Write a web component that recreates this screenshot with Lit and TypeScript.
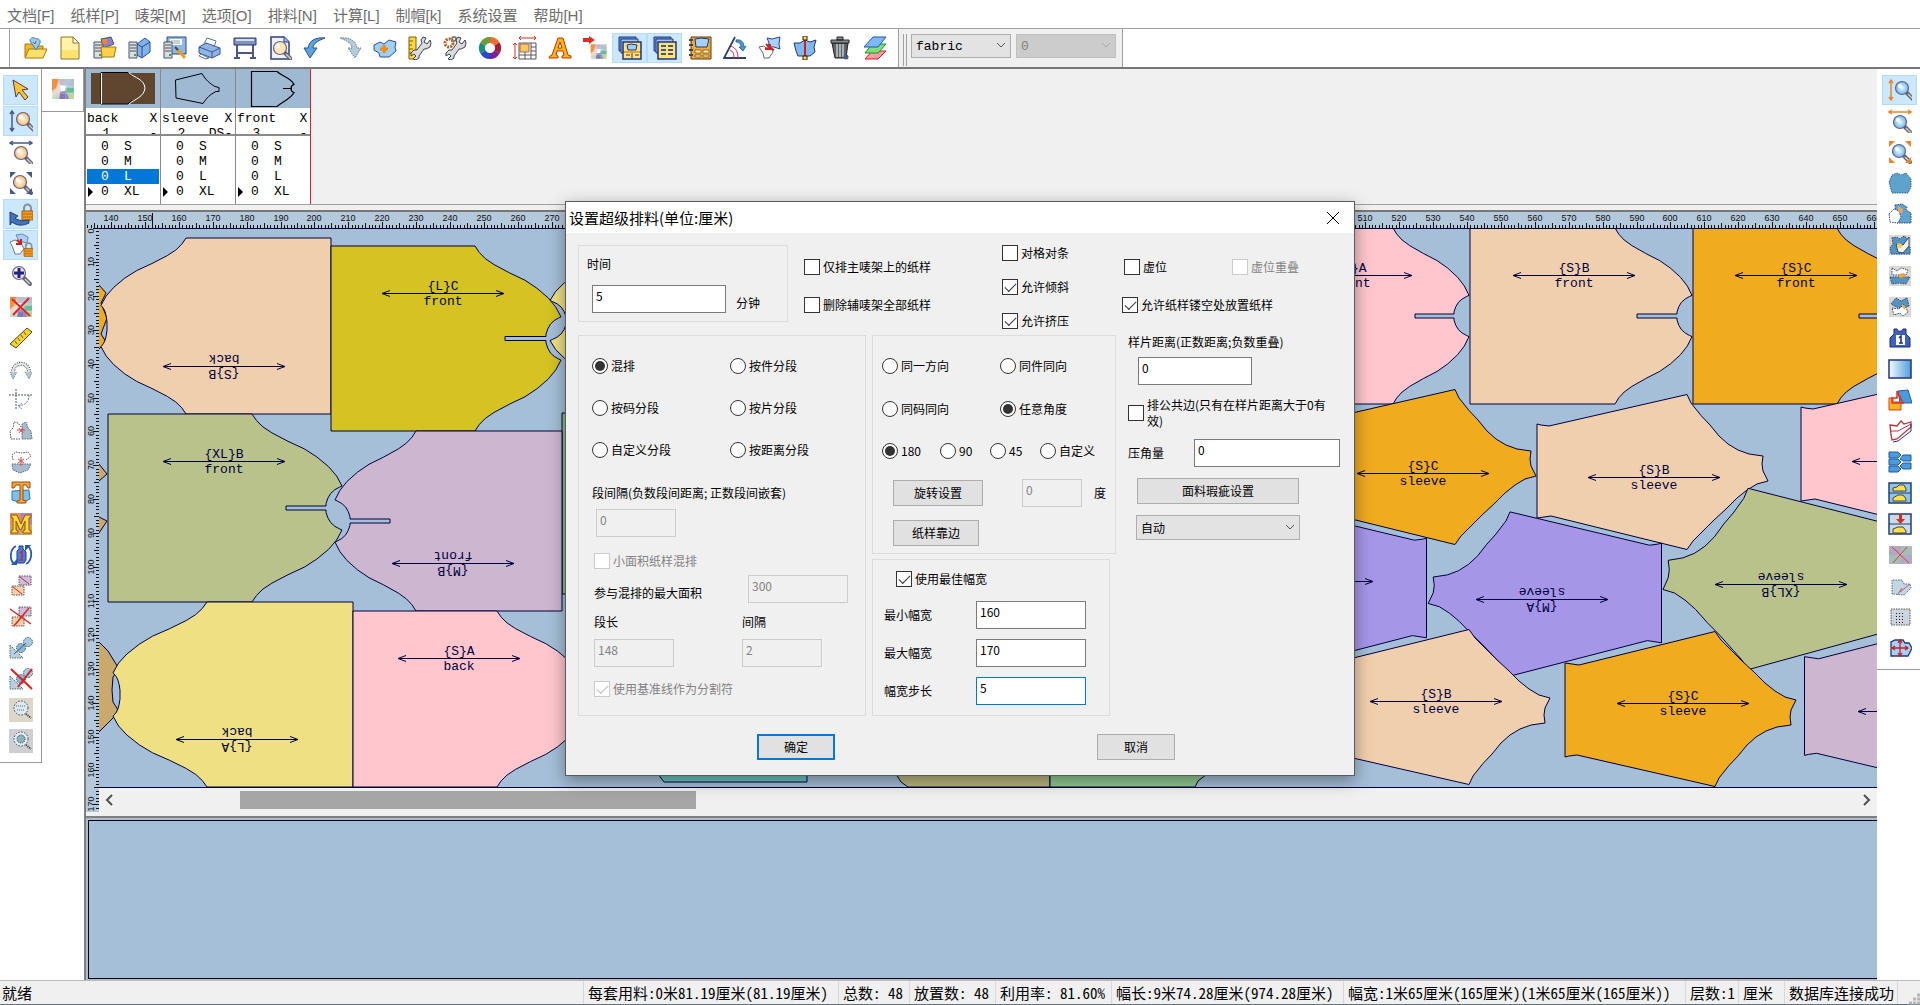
import { LitElement, html, svg, css, nothing } from "lit";
import { customElement } from "lit/decorators.js";
import { classMap } from "lit/directives/class-map.js";

/* ---------- icons (24 x 24 grid) ---------- */

const lens = (x: number, y: number, fill: string) => svg`
  <path d="M${x + 5} ${y + 5}l6 6" stroke="#5f6376" stroke-width="4" stroke-linecap="round"/>
  <path d="M${x + 6} ${y + 6}l5 5" stroke="#d6cdbc" stroke-width="1.500"/>
  <circle cx=${x} cy=${y} r="6.500" fill=${fill} stroke="#6a6288" stroke-width="1.200"/>
  <circle cx=${x - 2} cy=${y - 2} r="2.200" fill="#fff" opacity=".85"/>`;
const server = svg`
  <path d="M1 6h8v16H1z" fill="#d9dde2" stroke="#4b5563"/>
  <path d="M2 9h6M2 12h6M2 15h6" stroke="#4b5563"/><path d="M6 18h2v2H6z" fill="#2fae3b"/>`;
const lock = svg`
  <path d="M15 10V6a3.500 3.500 0 0 1 7 0v4" fill="none" stroke="#8b8f98" stroke-width="2"/>
  <path d="M13 9h11v9H13z" fill="#f59b1c" stroke="#a35a08"/><path d="M14 12h9M14 15h9" stroke="#b8690c"/>`;
const blob = (fill: string, stroke = "#24347a", dash = "") => svg`
  <path d="M4 5l5-1 3 2 4-3 4 3-1 5 3 3v7H3l-1-6 3-4z" fill=${fill} stroke=${stroke} stroke-dasharray=${dash}/>`;
const wrench = svg`
  <path d="M15 1l3 1-2 4 3 2 3-4 1 3-1 4-4 2-2 0-5 7 0 2-3 2-3-1 3-3-2-2-3 2 0-3 3-3 3 0 5-7-1-3z" fill="#d9dcdf" stroke="#3f4248"/>`;
const mosaic = svg`
  <path d="M1 2h22v20H1z" fill="url(#mosaicTint)"/>
  <path d="M1 2l7 0-3 9-4 3z" fill="#ee8a36" opacity=".85"/>
  <path d="M8 2h15v8l-9 1-5-1z" fill="#9fb2e0" opacity=".6"/>
  <path d="M14 11h9v5l-9 0z" fill="#4fb28a" opacity=".7"/>
  <path d="M9 15l6-1 3 8H8z" fill="#7a5ab8" opacity=".75"/>
  <path d="M9 8l6 1-1 5-4 0z" fill="#fff" opacity=".9"/>
  <path d="M8 2v20M15 9v13M8 9h15M8 16h15" stroke="#fff" opacity=".35"/>`;
const redCross = svg`<path d="M3 4l18 17M20 3L4 20" stroke="#dd2626" stroke-width="2"/>`;
const window3 = (body: unknown) => svg`
  <path d="M1 1h17v14H1z" fill="#5d95dc" stroke="#24347a"/><path d="M3 3h17v14H3z" fill="#9cc4f0" stroke="#24347a"/>
  <path d="M5 6h18v17H5z" fill="#ffe27a" stroke="#24347a" stroke-width="1.500"/>${body}`;
const grayCloth = svg`<path d="M1 2h22v20H1z" fill="#dcd8cf"/>`;

const ICONS: Record<string, unknown> = {
  open: svg`<path d="M2 8h7l2 2h9v11H2z" fill="#f0b72a" stroke="#a8780a"/><path d="M6 13h18l-4 9H2z" fill="#ffe06a" stroke="#a8780a"/><path d="M7 5c0-4 5-4 6-2 2-1 5 1 4 4l-4 7z" fill="#8fd0f2" stroke="#3c7fc0"/><path d="M10 6l2 2 1-3" stroke="#d33" fill="none"/>`,
  page: svg`<path d="M3 1h12l6 6v16H3z" fill="#fff3a8" stroke="#8c7320"/><path d="M4 14h16v8H4z" fill="#ffdc55" opacity=".7"/><path d="M15 1v6h6z" fill="#fff" stroke="#8c7320"/>`,
  openServer: svg`<path d="M8 3l10-2 3 7-10 4z" fill="#8d7fc9" stroke="#456"/><path d="M9 3h5v5H9z" fill="#e9873a"/>${server}<path d="M8 11h15l-2 10H9z" fill="#ffd04a" stroke="#a8780a"/>`,
  serverBook: svg`<path d="M9 8l8-6 5 4v10l-8 6-5-3z" fill="#7fb2ea" stroke="#2b4e8c"/><path d="M9 8l5 3 8-5M14 11v10" fill="none" stroke="#2b4e8c"/>${server}`,
  serverSave: svg`<path d="M4 1h19v17H4z" fill="#8db8ea" stroke="#33456e"/><path d="M7 3h12v6H7z" fill="#fff"/><path d="M8 5h9M8 7h9" stroke="#8aa"/>${server}<path d="M14 13l8 9" stroke="#e8a020" stroke-width="3"/><path d="M12 11l3 3" stroke="#444" stroke-width="2"/>`,
  printer: svg`<path d="M6 8l3-6 9 3-2 6z" fill="#fff" stroke="#5b6f9a"/><path d="M1 11l7-4 14 5v6l-8 4L1 17z" fill="#8fb4e6" stroke="#3b5691"/><path d="M1 11l13 5 8-4M14 16v6" fill="none" stroke="#3b5691"/><path d="M3 18l8 4-3 1-7-3z" fill="#fff" stroke="#5b6f9a"/>`,
  plotter: svg`<path d="M4 9v14M20 9v14M4 17h16M1 22h6M17 22h6" stroke="#4b5785" stroke-width="2"/><path d="M1 2h22v7H1z" fill="#7f92bf" stroke="#2c3866"/><path d="M3 4h18" stroke="#d4dcf2" stroke-width="2"/>`,
  preview: svg`<path d="M3 1h13l5 5v17H3z" fill="#eef4fc" stroke="#2c3e7c" stroke-width="1.500"/><path d="M16 1v5h5" fill="#9dbbe8" stroke="#2c3e7c"/>${lens(12, 12, "#ffe6b8")}`,
  undo: svg`<path d="M22 2C12 1 6 5 5 12H1l6 10 7-10h-4c0-4 4-7 12-10z" fill="#5fa0dd" stroke="#24508f"/>`,
  redo: svg`<path d="M2 2c10-1 16 3 17 10h4l-6 10-7-10h4C14 8 10 5 2 2z" fill="#b6ccd8" stroke="#5e7d90" stroke-dasharray="1.500 1"/>`,
  addPiece: svg`<path d="M1 9l6-3 4 2 5-4 7 2-1 5 1 4-7 6H7l-1-4-5-3z" fill="#9fd0f7" stroke="#2c4f9c"/><path d="M11 9v8M7 13h8" stroke="#f08a13" stroke-width="3"/>`,
  rulerWrench: svg`<path d="M1 1h7v22H1z" fill="#ffd83b" stroke="#7a6108"/><path d="M1 5h4M1 9h3M1 13h4M1 17h3" stroke="#7a6108"/>${wrench}`,
  gearWrench: svg`<circle cx="6" cy="7" r="4" fill="none" stroke="#b0622a" stroke-width="3" stroke-dasharray="2 1"/><circle cx="11" cy="3" r="2" fill="none" stroke="#8d7b6a" stroke-width="2"/>${wrench}`,
  colorRing: svg`<g fill="none" stroke-width="6"><path d="M12 4a8 8 0 0 1 7 4" stroke="#e8702a"/><path d="M19 8a8 8 0 0 1 0 8" stroke="#a01c3c"/><path d="M19 16a8 8 0 0 1-7 4" stroke="#7a1fa0"/><path d="M12 20a8 8 0 0 1-7-4" stroke="#2848c8"/><path d="M5 16a8 8 0 0 1 0-8" stroke="#1c8c7c"/><path d="M5 8a8 8 0 0 1 7-4" stroke="#6a9a3c"/></g>`,
  sizeTable: svg`<path d="M6 7h17v16H6z" fill="#fff" stroke="#555"/><path d="M7 8h9v8H7z" fill="#f6c95c" stroke="#a65"/><path d="M6 19h17M18 7v16M12 16v7M18 11h5M18 15h5" stroke="#556"/><path d="M6 2h17M2 7v16M8 0L6 2l2 2M21 0l2 2-2 2M0 9l2-2 2 2M0 21l2 2 2-2" stroke="#cc3322" fill="none"/>`,
  letterA: svg`<path d="M1 22l1-2 2-1L10 2h5l5 17 3 1v2h-9v-2l2-1-1-4H9l-1 4 2 1v2z" fill="#ffb21c" stroke="#b43a00"/><path d="M10 12h4l-2-6z" fill="#fff" stroke="#b43a00"/>`,
  importColor: svg`<g transform="translate(7 7) scale(.72)">${mosaic}</g><path d="M0 2h6V0l6 4-6 4V6H0z" fill="#d43324"/>`,
  winPiece: window3(svg`<path d="M5 16h18M14 16v7M8 19h4M17 19h4" stroke="#24347a"/><path d="M6 15h16v2H6z" fill="#f0a030"/><path d="M9 9l4-1 6 1-1 5h-8z" fill="#9fd0f7" stroke="#24347a"/>`),
  winList: window3(svg`<path d="M8 10h5M15 10h5M8 14h5M15 14h5M8 18h5M15 18h5" stroke="#4a5480" stroke-width="2"/>`),
  book: svg`<path d="M3 1h20v22H3z" fill="#f2a93a" stroke="#533b10"/><path d="M7 3l6-1 8 1-2 8H8z" fill="#a3d2f4" stroke="#24347a"/><path d="M7 14h6v3H7zM15 14h6v3h-6zM7 19h6v2H7zM15 19h6v2h-6z" fill="#fff0a8" stroke="#533b10" stroke-width=".6"/><path d="M1 4h4M1 9h4M1 14h4M1 19h4" stroke="#445" stroke-width="2"/>`,
  angle: svg`<path d="M12 1L1 22h22" fill="none" stroke="#31416e" stroke-width="1.800"/><path d="M8 10c5 2 7 6 7 12M7 14c3 1 4 4 4 8" fill="none" stroke="#cc3344"/><path d="M13 4c5-1 8 2 8 7l2-1-3 5-4-4 2 0c0-3-2-5-5-5z" fill="#4b93d8" stroke="#1c4c88" stroke-width=".7"/>`,
  swapPiece: svg`<path d="M9 2l5 1 8-2-1 7 1 5-6-2-6 0 1-4z" fill="#a9d0f5" stroke="#2c4390"/><path d="M1 11l5-1 2 2 5-1 2 5-4 6H6l-1-5z" fill="#fff" stroke="#666"/><path d="M8 8l4 4M12 8v5H7M16 14l-4-2" stroke="#cc2222" stroke-width="2" fill="none"/>`,
  splitPiece: svg`<path d="M1 7l6 0 5-3 5 2 6-2-2 7 1 5-5 4H5L3 15z" fill="#82b9ec" stroke="#24347a"/><path d="M12 3v18" stroke="#cc2222" stroke-width="2"/><path d="M10 0h4v4h-4zM10 20h4v4h-4z" fill="#ffd83b" stroke="#222"/>`,
  trash: svg`<path d="M4 7h16l-2 15H7z" fill="#5e6368" stroke="#222"/><path d="M9 8v13M12 8v13M15 8v13" stroke="#c6cbd0" stroke-width="1.500"/><path d="M3 4h18v3H3zM9 1h6v3H9z" fill="#8a9096" stroke="#222"/><circle cx="18" cy="21" r="2.500" fill="#445a80"/>`,
  layers: svg`<path d="M9 15h14l-8 8H2z" fill="#ff9aa2" stroke="#c22"/><path d="M9 8h14l-8 9H2z" fill="#7de07c" stroke="#1f8f2f"/><path d="M10 1h13l-8 10H1z" fill="#7db8f8" stroke="#2455a8"/>`,

  pointer: svg`<path d="M4 2l15 9-6 1 6 7-3 3-6-8-3 5z" fill="#ffc531" stroke="#4a3660"/>`,
  zoomV: svg`${lens(14, 10, "url(#warmLens)")}<path d="M3 2v20M1 5l2-3 2 3M1 19l2 3 2-3" stroke="#4a5a88" fill="none" stroke-width="1.500"/>`,
  zoomH: svg`${lens(12, 13, "url(#warmLens)")}<path d="M1 3h22M4 1L1 3l3 2M20 1l3 2-3 2" stroke="#4a5a88" fill="none" stroke-width="1.500"/>`,
  zoomFit: svg`${lens(11, 11, "url(#warmLens)")}<path d="M1 1h6L1 7zM23 1h-6l6 6zM1 23h6l-6-6zM23 23h-6l6-6z" fill="#4a5a88"/>`,
  arrowLock: svg`${lock}<path d="M1 10l8 4-3 2c4 3 8 3 14 2v3c-6 3-12 3-17-1l-2 3z" fill="#4473b8" stroke="#25407c"/>`,
  pieceLock: svg`<path d="M7 2l6-1 6 3-1 6-8-2z" fill="#a9d0f5" stroke="#6a86b0"/><path d="M1 9l5-2 6 3 3 6-4 5H6l-2-6z" fill="#fff" stroke="#777"/><path d="M8 7l4 4M12 6v5H7" stroke="#cc2222" stroke-width="2"/><g transform="translate(4 8) scale(.85)">${lock}</g>`,
  zoomPlus: svg`${lens(10, 9, "#ecdfee")}<path d="M10 4v10M5 9h10" stroke="#1c2280" stroke-width="3"/>`,
  mosaicX: svg`${mosaic}${redCross}`,
  ruler: svg`<path d="M1 18L18 2l5 4L7 22z" fill="#f4d232" stroke="#4c4420"/><path d="M6 15l2 3M9 12l2 3M12 9l2 3M15 6l2 3" stroke="#6b5d18"/>`,
  rotateArc: svg`<path d="M4 18C2 3 22 3 20 18" fill="none" stroke="#444" stroke-width="4" stroke-dasharray="1 1"/><path d="M4 18C2 3 22 3 20 18" fill="none" stroke="#dfe6e8" stroke-width="2"/><path d="M1 15l3 7 4-7M16 15l4 7 3-7" fill="#b8c8cc" stroke="#678" stroke-dasharray="1 1"/>`,
  axisArc: svg`<path d="M7 1v20M0 7h24" stroke="#556" stroke-dasharray="2 1"/><path d="M20 7c0 7-4 10-10 11M13 15l-4 3 4 3" fill="none" stroke="#6a7390" stroke-dasharray="2 1"/>`,
  flipH: svg`<path d="M11 20H2l-1-8 3-3 1-6 4 1 3 4" fill="#fff" stroke="#555" stroke-dasharray="1.500 1"/><path d="M13 20h10l-1-8-3-3-2-6-4 2z" fill="#a9bccd" stroke="#567" stroke-dasharray="1.500 1"/><path d="M8 11h8M10 9l4 5M14 9l-4 5" stroke="#d44"/>`,
  flipV: svg`<path d="M4 10l-1-5 4-3 6 1 6-1 3 4-5 4" fill="#fff" stroke="#555" stroke-dasharray="1.500 1"/><path d="M3 14h19l-3 6-8 3-7-3z" fill="#a9bccd" stroke="#567" stroke-dasharray="1.500 1"/><path d="M12 7v9M9 9l6 4M15 9l-6 4" stroke="#d44"/>`,
  letterT: svg`<path d="M3 10l17-1 1 9-8 4-10-3z" fill="#7dc1ea" stroke="#2e79aa"/><path d="M3 1h18v6h-2l-2-3h-3v15l3 1v2H8v-2l3-1V4H7L5 7H3z" fill="#f5a53a" stroke="#a04a08"/>`,
  letterM: svg`<path d="M1 1h22v22H1z" fill="#c9a56c"/><path d="M1 1h11v11H1z" fill="#dd9460"/><path d="M12 1h11v11H12z" fill="#a887b8"/><path d="M2 21V19l2-1V6L2 5V3h6l4 9 4-9h6v2l-2 1v12l2 1v2h-8v-2l2-1V9l-4 9h-1L7 9v9l2 1v2z" fill="#ffdf2c" stroke="#a84a10"/>`,
  turnPiece: svg`<path d="M8 8l2-2V3h4v3l3 3v8l-2 3H8z" fill="#3f7fe6" stroke="#1c3d94"/><path d="M11 10l2-2v9M10 17h4" fill="none" stroke="#d22" stroke-width="1.500"/><path d="M7 3C1 6 0 16 5 21M17 21c6-3 7-13 2-18" fill="none" stroke="#2b57b0" stroke-width="1.800"/><path d="M2 22h6v-6zM22 2h-6v6z" fill="#2b57b0"/>`,
  align: svg`<path d="M10 2h12v9H10z" fill="#cdbfdb" stroke="#555" stroke-dasharray="1.500 1"/><path d="M3 12h12v9H3z" fill="#f8cfa6" stroke="#555" stroke-dasharray="1.500 1"/><path d="M4 13l9 7M11 3l9 7" stroke="#d22"/>`,
  alignX: svg`<path d="M10 2h12v9H10z" fill="#cdbfdb" stroke="#555" stroke-dasharray="1.500 1"/><path d="M3 12h12v9H3z" fill="#f8cfa6" stroke="#555" stroke-dasharray="1.500 1"/><path d="M1 4l21 15M5 21L20 3" stroke="#e02020" stroke-width="1.500"/>`,
  chain: svg`<path d="M1 9v13h13z" fill="#b8cfe0" stroke="#567" stroke-dasharray="1.500 1"/><circle cx="12" cy="12" r="4.500" fill="#86b8d8" stroke="#456" stroke-dasharray="1.500 1"/><circle cx="19" cy="6" r="4.500" fill="#a5cbe2" stroke="#456" stroke-dasharray="1.500 1"/><path d="M5 18l12-11" stroke="#456"/>`,
  chainX: svg`<path d="M1 9v13h13z" fill="#b8cfe0" stroke="#567" stroke-dasharray="1.500 1"/><circle cx="12" cy="12" r="4.500" fill="#86b8d8" stroke="#456" stroke-dasharray="1.500 1"/><circle cx="19" cy="6" r="4.500" fill="#a5cbe2" stroke="#456" stroke-dasharray="1.500 1"/><path d="M2 2l21 20M23 2L9 20" stroke="#e02020" stroke-width="2"/>`,
  zoomDotA: svg`<path d="M0 0h24v24H0z" fill="#ddd6cb"/><circle cx="12" cy="10" r="7" fill="#dfe9ee" stroke="#345" stroke-dasharray="1.500 1.500"/><path d="M7 8h10M8 12h8" stroke="#567" stroke-dasharray="1 1"/><path d="M17 16l5 4" stroke="#333" stroke-width="2" stroke-dasharray="1 1"/>`,
  zoomDotB: svg`<path d="M0 0h24v24H0z" fill="#cfcfd3"/><circle cx="12" cy="10" r="7" fill="#e4edf0" stroke="#345" stroke-dasharray="1.500 1.500"/><circle cx="12" cy="10" r="4" fill="#8db3bd" stroke="#345" stroke-dasharray="1 1"/><path d="M17 16l5 4" stroke="#333" stroke-width="2" stroke-dasharray="1 1"/>`,
  mosaic,

  rZoomV: svg`${lens(14, 10, "url(#coolLens)")}<path d="M3 2v20M1 5l2-3 2 3M1 19l2 3 2-3" stroke="#e8862a" fill="none" stroke-width="1.500"/>`,
  rZoomH: svg`${lens(12, 13, "url(#coolLens)")}<path d="M1 3h22M4 1L1 3l3 2M20 1l3 2-3 2" stroke="#e8862a" fill="none" stroke-width="1.500"/>`,
  rZoomFit: svg`${lens(11, 11, "url(#coolLens)")}<path d="M1 1h6L1 7zM23 1h-6l6 6zM1 23h6l-6-6zM23 23h-6l6-6z" fill="#e8862a"/>`,
  piece: svg`<path d="M1 11l3-7 5-2 4 2 5-2 5 6v8l-3 6H4z" fill="#5fa3cc" stroke="#28608c" stroke-dasharray="1.500 1"/>`,
  pieceA: svg`<path d="M7 3l7-1 5 3-1 3 5 3v10H9z" fill="#5fa3cc" stroke="#28458c" stroke-dasharray="1.500 1"/><path d="M1 12l5-5 5 2 2 6-3 6-8-1z" fill="#fff" stroke="#28458c" stroke-dasharray="1.500 1"/><path d="M10 4l5 3-1 5-4-3z" fill="#f0a55a"/>`,
  pieceB: svg`${grayCloth}${blob("#5594bf", "#28458c", "1.500 1")}<path d="M8 11l7 1 6-8v9l-6 7-5-1z" fill="#f6f1da" stroke="#28458c"/><path d="M9 10l5 1-1 4h-3z" fill="#f2cf3c"/>`,
  pieceC: svg`${grayCloth}<path d="M4 4l5 3 4-3 7 2-2 5H4z" fill="#fff" stroke="#28458c" stroke-dasharray="1.500 1"/><path d="M2 13h20l-4 7-7-1-7 1z" fill="#5594bf" stroke="#28458c" stroke-dasharray="1.500 1"/><path d="M11 10l5-1 2 4-6 1z" fill="#f0a03c"/>`,
  pieceD: svg`${grayCloth}<path d="M3 9l5-6 5 3 6-3 2 8-6 2-7-1z" fill="#5594bf" stroke="#28458c" stroke-dasharray="1.500 1"/><path d="M4 13l7 1 5-5 4 8-5 4-3-3-6 2z" fill="#fff" stroke="#28458c" stroke-dasharray="1.500 1"/><path d="M14 9l3 2v4l-3-3z" fill="#f0b03c"/>`,
  shirtOne: svg`<path d="M2 21v-9l4-4V3h3c1 3 5 3 6 0h3v5l4 4v9z" fill="#3f62b8" stroke="#1c2c78"/><path d="M8 9h9v10H8z" fill="#fff"/><path d="M11 12l2-2v7M11 17h4" stroke="#1c2c78" fill="none" stroke-width="1.500"/>`,
  gradient: svg`<path d="M1 3h22v18H1z" fill="url(#fade)" stroke="#24347a" stroke-width="1.500"/>`,
  shapes: svg`<path d="M10 3l10-1 4 13H12z" fill="#4a9ae0" stroke="#2a5a9c"/><path d="M1 10h4v4h8v8H1z" fill="#ffb41f" stroke="#c8452a"/><path d="M4 10h5V3l6 12H4z" fill="none" stroke="#dd3020" stroke-width="1.500"/>`,
  redPieces: svg`<path d="M2 6l7 1 4-5 3 3 7-2v5L9 20l-5 1-1-5z" fill="#fff" stroke="#b8323c" stroke-width="1.300"/><path d="M3 12l7 0 13-7" fill="none" stroke="#b8323c"/><path d="M5 23l5-1 13-10V5" fill="none" stroke="#24347a"/>`,
  stack: svg`<path d="M1 2h9l3 3-3 3H1zM1 9h9l3 3-3 3H1zM1 16h9l3 3-3 3H1zM23 5h-8l-3 4 3 2h8zM23 13h-8l-3 3 3 3h8z" fill="#4a9ae0" stroke="#235a9c"/>`,
  twoRows: svg`<path d="M1 2h22v20H1z" fill="#8cc4ec" stroke="#24406c" stroke-width="1.500"/><path d="M1 12h22" stroke="#24406c"/><path d="M5 10V7l4-1 2-2h5l2 4v2zM5 20v-3l5-3h5l3 4v2z" fill="#ffdf4a" stroke="#444"/>`,
  dropRow: svg`<path d="M1 2h22v20H1z" fill="#c8dcec" stroke="#24406c" stroke-width="1.500"/><path d="M1 12h22" stroke="#24406c"/><path d="M5 21v-4l5-2h5l3 4v2z" fill="#ffdf4a" stroke="#444"/><path d="M11 2h3v5h3l-4.500 5L8 7h3z" fill="#d42f24"/>`,
  grayX: svg`<path d="M1 3h23v18H1z" fill="#a6bdb8"/><path d="M1 3h12v9H1z" fill="#b3a8bd"/><path d="M12 12h12v9H12z" fill="#b1abc8"/><path d="M4 4l17 16M19 4L5 20" stroke="#d8453a"/>`,
  foldPiece: svg`<path d="M4 20V6h10l2 4 6 0 1 4-7 7z" fill="#c3d6e4" stroke="#57688c" stroke-dasharray="1.500 1"/><path d="M12 18l10-8M10 20l4-6" stroke="#c55"/>`,
  dots: svg`<path d="M3 4h19v16H3z" fill="#ccd5de" stroke="#555" stroke-dasharray="1.500 1"/><path d="M8 8.500h9M8 11.500h9M8 14.500h9M8 17.500h9" stroke="#222" stroke-dasharray="1 2"/>`,
  movePiece: svg`<path d="M3 20V6l4-2h8l2 3h4l3 5-4 8z" fill="#a8d0f0" stroke="#24347a" stroke-width="1.300"/><path d="M12 5v14M5 12h14M10 7l2-3 2 3M10 17l2 3 2-3M7 10l-3 2 3 2M17 10l3 2-3 2" stroke="#c4202c" fill="none" stroke-width="1.300"/>`,
};

const TOP_TOOLS = ["open", "page", "openServer", "serverBook", "serverSave", "printer", "plotter", "preview", "undo", "redo", "addPiece", "rulerWrench", "gearWrench", "colorRing", "sizeTable", "letterA", "importColor", "winPiece", "winList", "book", "angle", "swapPiece", "splitPiece", "trash", "layers"];
const LEFT_TOOLS = ["pointer", "zoomV", "zoomH", "zoomFit", "arrowLock", "pieceLock", "zoomPlus", "mosaicX", "ruler", "rotateArc", "axisArc", "flipH", "flipV", "letterT", "letterM", "turnPiece", "align", "alignX", "chain", "chainX", "zoomDotA", "zoomDotB"];
const RIGHT_TOOLS = ["rZoomV", "rZoomH", "rZoomFit", "piece", "pieceA", "pieceB", "pieceC", "pieceD", "shirtOne", "gradient", "shapes", "redPieces", "stack", "twoRows", "dropRow", "grayX", "foldPiece", "dots", "movePiece"];
const PRESSED = new Set(["winPiece", "winList", "pointer", "zoomV", "arrowLock", "pieceLock", "rZoomV"]);

/* ---------- marker geometry ---------- */

const PEACH = "#f0cfae", PINK = "#ffc6ce", ORANGE = "#f0ab1f", OLIVE = "#bac28b";
const LILAC = "#cdb6d0", VIOLET = "#a696e8", YELLOW = "#efe083", MUSTARD = "#d4c322";

type Pt = [number, number];
const toPath = (pts: Pt[]) => "M" + pts.map(([x, y]) => `${x.toFixed(1)} ${y.toFixed(1)}`).join("L") + "Z";

const SHOULDER: Pt[] = [[0, 0], [.05, .035], [.12, .068], [.22, .1], [.4, .145], [.58, .185], [.72, .228], [.85, .28], [.94, .33], [1, .383]];
const NECK: Pt[] = [[.15, .05], [.45, .17], [.7, .33], [.88, .55], [1, .8]];

/* Bodice: straight hem at `flat`, shoulders from `sh` out to `tip`; `dart` is where the slit ends. */
function bodice(flat: number, sh: number, tip: number, top: number, bot: number, depth: number, dart?: number) {
  const h = bot - top, mid = (top + bot) / 2, dir = Math.sign(tip - flat);
  const up: Pt[] = SHOULDER.map(([u, v]) => [sh + (tip - sh) * u, top + h * v]);
  const tipY = top + h * .383;
  NECK.forEach(([u, v]) => up.push([tip - dir * depth * u, tipY + (mid - tipY) * v]));
  if (dart !== undefined) up.push([tip - dir * depth, mid - 2], [dart, mid - 2]);
  const down = up.map(([x, y]): Pt => [x, 2 * mid - y]).reverse();
  return toPath([[flat, top], ...up, ...down, [flat, bot]]);
}

const SLEEVE: Pt[] = [[-150, -48], [-146, -47], [-138, -46], [0, -77.5], [4, -69], [14, -56.5], [23, -47], [32, -36], [41, -28], [51, -22], [62, -18], [76, -16], [75, -8], [76, -1], [81, 9], [70, 12], [60, 18], [50, 26], [39, 37], [27, 48], [14, 61], [6, 69], [0, 77.5], [-136, 44], [-150, 46]];
const sleeve = (x: number, cy: number, sx = 1, sy = 1) => toPath(SLEEVE.map(([px, py]): Pt => [x + px * sx, cy + py * sy]));

interface Piece { d: string; fill: string; }
const PIECES: Piece[] = [
  { d: "M90 285L99 285 106 293 101 303 107 318 101 334 106 342 99 349H90Z", fill: ORANGE },
  { d: "M90 464H99L107 474 99 481H90Z", fill: "#c9a96c" },
  { d: "M90 517H99L107 521 99 533H90Z", fill: "#c9a96c" },
  { d: "M90 642H99L108 651 119 669 113 677 112 690 113 702 118 710 113 718 99 732H90Z", fill: "#c9a96c" },
  { d: bodice(790, 645, 550, 235, 406, 16), fill: YELLOW },
  { d: "M562 413H760V594H562Z", fill: "#8bc084" },
  { d: "M658 774L664 782H807V774Z", fill: "#6fc4c2" },
  { d: "M896 774L901 782 908 787H1050V774Z", fill: "#bab880" },
  { d: "M1050 774V787H1195L1198 781 1207 774Z", fill: "#93cb92" },
  { d: bodice(331, 186, 101, 238, 414, 6), fill: PEACH },
  { d: bodice(331, 475, 561, 246, 431, 15, 505), fill: MUSTARD },
  { d: bodice(108, 252, 342, 414, 602, 16, 286), fill: OLIVE },
  { d: bodice(562, 416, 335, 431, 611, 15, 390), fill: LILAC },
  { d: bodice(353, 207, 113, 602, 787, 7), fill: YELLOW },
  { d: bodice(353, 497, 581, 611, 787, 6), fill: PINK },
  { d: bodice(1248, 1393, 1469, 228, 404, 15, 1415), fill: PINK },
  { d: bodice(1470, 1615, 1692, 228, 404, 15, 1637), fill: PEACH },
  { d: bodice(1693, 1837, 1914, 228, 404, 15, 1859), fill: ORANGE },
  { d: sleeve(1455, 467), fill: ORANGE },
  { d: sleeve(1687, 472), fill: PEACH },
  { d: sleeve(1951, 455), fill: PINK },
  { d: sleeve(1275, 589, -1.01, 1.06), fill: VIOLET },
  { d: sleeve(1510, 594, -1.01, 1.06), fill: VIOLET },
  { d: sleeve(1748, 579, -1.05, 1.17), fill: OLIVE },
  { d: sleeve(1469, 707, 1, -1), fill: PEACH },
  { d: sleeve(1715, 709, 1, -1), fill: ORANGE },
  { d: sleeve(1956, 705, 1.01, -1.05), fill: LILAC },
];

const LABELS: { x: number; y: number; half: number; size: string; name: string; flip?: boolean }[] = [
  { x: 224, y: 367, half: 61, size: "{S}B", name: "back", flip: true },
  { x: 443, y: 293, half: 61, size: "{L}C", name: "front" },
  { x: 224, y: 461, half: 61, size: "{XL}B", name: "front" },
  { x: 453, y: 564, half: 61, size: "{M}B", name: "front", flip: true },
  { x: 237, y: 740, half: 61, size: "{L}A", name: "back", flip: true },
  { x: 459, y: 658, half: 61, size: "{S}A", name: "back" },
  { x: 1351, y: 275, half: 61, size: "{S}A", name: "front" },
  { x: 1574, y: 275, half: 61, size: "{S}B", name: "front" },
  { x: 1796, y: 275, half: 61, size: "{S}C", name: "front" },
  { x: 1423, y: 473, half: 66, size: "{S}C", name: "sleeve" },
  { x: 1654, y: 477, half: 66, size: "{S}B", name: "sleeve" },
  { x: 1918, y: 461, half: 66, size: "{S}A", name: "sleeve" },
  { x: 1307, y: 582, half: 66, size: "{M}A", name: "sleeve", flip: true },
  { x: 1542, y: 600, half: 66, size: "{M}A", name: "sleeve", flip: true },
  { x: 1781, y: 585, half: 66, size: "{XL}B", name: "sleeve", flip: true },
  { x: 1436, y: 701, half: 66, size: "{S}B", name: "sleeve" },
  { x: 1683, y: 703, half: 66, size: "{S}C", name: "sleeve" },
  { x: 1924, y: 711, half: 66, size: "{M}B", name: "sleeve" },
];

const PX_PER_CM = 3.39;
const range = (a: number, b: number) => Array.from({ length: b - a }, (_, i) => a + i);

/* ---------- component ---------- */

@customElement("app-root")
export class AppRoot extends LitElement {
  static styles = css`
    :host { display: block; height: 100vh; min-height: 900px; overflow: hidden; color: #000;
      font-family: "Liberation Sans", "Noto Sans CJK SC", sans-serif; }
    * { box-sizing: border-box; }
    button, input, select { font: inherit; color: inherit; margin: 0; border-radius: 0; }
    .app { position: relative; display: flex; flex-direction: column; height: 100%; background: #fff; }
    .menu { display: flex; gap: 16px; height: 29px; padding: 3px 7px 0; align-items: center;
      border-bottom: 1px solid #a0a0a0; font-size: 15px; }
    .menu a { color: #6d6d6d; text-decoration: none; line-height: 24px; }
    .bar { display: flex; height: 40px; border-bottom: 2px solid #777; }
    .tools { display: flex; align-items: center; margin-left: 9px; padding: 0 6px 0 7px; border-left: 1px solid #a0a0a0; }
    .tool { display: grid; place-items: center; width: 35px; height: 30px; padding: 0; border: 0; background: none; }
    .tool.on { background: #cce8ff; box-shadow: inset 0 0 0 1px #b4dcfa; }
    .icon { display: block; width: 24px; height: 24px; fill: none; }
    .combos { display: flex; gap: 5px; padding: 5px 6px 0 4px; background: #f0f0f0; border: solid #a0a0a0; border-width: 0 1px; }
    .grip { width: 4px; height: 32px; margin-right: -1px; border: solid #a0a0a0; border-width: 0 1px; }
    .combo { display: grid; align-items: center; }
    .combo > * { grid-area: 1 / 1; }
    .combo svg { width: 10px; height: 6px; margin-right: 5px; justify-self: end; fill: none; stroke: #555; pointer-events: none; }
    .combo select { width: 100%; height: 100%; padding: 0 4px; appearance: none; background: #e3e3e3; border: 1px solid #adadad; }
    .combo select:disabled { background: #ccc; color: #808080; opacity: 1; border-color: #bfbfbf; }
    .combo select:disabled + svg { stroke: #aaa; }
    .combo.bar-combo { width: 100px; height: 24px; font: 13px "Liberation Mono", monospace; }

    .work { display: flex; flex: 1; min-height: 0; }
    .rail { display: flex; flex-direction: column; gap: 1px; align-self: flex-start; width: 42px; padding: 6px 3px; border: solid #999; border-width: 0 1px 1px 0; }
    .rail .tool { width: 35px; }
    .rail.side { padding: 5px 3px 7px; }
    .rail.right { width: 43px; padding-left: 5px; border-width: 0 0 1px; }
    .main { display: flex; flex-direction: column; flex: 1; min-width: 0; background: #f0f0f0; border-left: 2px solid #808080; }

    .pieces { display: flex; height: 136px; border-bottom: 1px solid #a0a0a0; }
    .cell { display: flex; flex-direction: column; width: 75px; border-right: 1px solid #8a8a8a; background: #fff;
      font: 13px/15px "Liberation Mono", monospace; }
    .cell:last-child { border-right-color: #e02020; }
    .thumb { display: block; width: 100%; height: 39px; background: #a0b9d2; }
    .caption { height: 28px; padding: 3px 0 0 1px; overflow: hidden; white-space: pre; border-bottom: 2px solid #8a8a8a; }
    .caption span { display: block; }
    .sizes { margin: 0; padding: 3px 1px; list-style: none; }
    .sizes li { display: grid; grid-template-columns: 14px 23px 1fr; height: 15px; line-height: 15px; }
    .sizes .sel { background: #0078d7; color: #fff; }
    .sizes i { align-self: center; margin-left: 1px; width: 0; height: 0; border: solid transparent; border-width: 5px 0 5px 5px; border-left-color: #000; }
    .sizes i.none { visibility: hidden; }

    .marker { display: grid; grid-template: 16px 560px 24px / 13px minmax(0, 1fr); margin-top: 5px; border-top: 2px solid #777; }
    .hruler { grid-column: 1 / -1; width: 100%; height: 16px; background: #b4c9db; }
    .vruler { grid-row: 2 / -1; width: 13px; height: 584px; background: #b4c9db; }
    .ruler-text { font: 9px "Liberation Sans", sans-serif; fill: #111; text-anchor: middle; }
    .tick { stroke: #111; stroke-width: 1; fill: none; shape-rendering: crispEdges; }
    .canvas { display: block; width: 100%; height: 560px; background: #a5bfd8; }
    .piece { stroke: #00003c; stroke-width: 1; }
    .label { font: 13px "Liberation Mono", monospace; fill: #00003c; text-anchor: middle; }
    .grain { stroke: #00003c; fill: none; }
    .scroll { display: flex; align-items: center; padding: 0 6px; background: #f0f0f0; }
    .scroll svg { width: 8px; height: 12px; fill: none; stroke: #505050; stroke-width: 2; }
    .track { flex: 1; display: flex; height: 18px; padding: 0 4px; }
    .before { flex: 123; }
    .thumbbar { flex: 455; background: #a6a6a6; }
    .after { flex: 1162; }
    .lower { flex: 1; margin-top: 4px; padding: 2px 0 1px 2px; border-top: 2px solid #808080; background: #a5bfd8; }
    .lower-in { height: 100%; border: solid #000; border-width: 1px 0 1px 1px; }

    .status { display: flex; height: 25px; border-top: 1px solid #bbb; border-bottom: 1px solid #5f7480; background: #f0f0f0;
      font-family: "Noto Sans Mono CJK SC", "Noto Sans CJK SC", monospace; font-size: 15px; line-height: 24px; white-space: pre; }
    .status span { padding-left: 4px; border-right: 1px solid #d8d8d8; flex: none; overflow: hidden; }
    .status .ready { flex: 1 1 0; padding-left: 2px; }
    .s1 { width: 255px; } .s2 { width: 71px; } .s3 { width: 86px; } .s4 { width: 116px; } .s5 { width: 232px; }
    .s6 { width: 342px; } .s7 { width: 53px; } .s8 { width: 46px; } .s9 { width: 113px; }
    .size-grip { width: 22px; height: 24px; padding: 6px 0 0 6px; }

    .overlay { position: absolute; inset: 0; display: grid; place-content: center; padding-bottom: 28px; }
    .dialog { width: 790px; background: #f0f0f0; border: 1px solid #5a5a5a; box-shadow: 0 5px 16px rgba(0, 0, 0, .38);
      font: 12px/20px "Noto Sans CJK SC", sans-serif; }
    .title { display: flex; justify-content: space-between; align-items: center; height: 31px; padding: 0 14px 0 3px; background: #fff; }
    .title h1 { margin: 0; font-size: 15px; font-weight: 400; }
    .close { display: grid; place-items: center; width: 14px; height: 20px; padding: 0; border: 0; background: none; }
    .close svg { width: 14px; height: 14px; stroke: #000; }
    .body { display: flex; gap: 6px; padding: 12px 12px 0; }
    .wide { width: 538px; }
    .top { display: flex; height: 90px; }
    .group { margin: 0; padding: 0; border: 1px solid #dcdcdc; min-width: 0; }
    .time { width: 210px; height: 77px; padding: 8px; }
    .time > label { display: block; }
    .time-row { display: flex; align-items: flex-end; gap: 10px; margin-top: 11px; padding-left: 5px; }
    .stack { display: flex; flex-direction: column; }
    .stack.a { width: 198px; gap: 22px; margin: 14px 0 0 16px; }
    .stack.b { gap: 18px; }
    .opt { display: flex; align-items: center; gap: 3px; height: 16px; line-height: 16px; white-space: nowrap; }
    .opt.off { color: #838383; }
    .opt input { appearance: none; flex: none; display: grid; place-items: center; width: 16px; height: 16px; background: #fff; border: 1px solid #333; }
    .opt input[type="radio"] { border-radius: 50%; }
    .opt input:disabled { border-color: #ccc; }
    .opt input[type="radio"]:checked::before { content: ""; width: 10px; height: 10px; border-radius: 50%; background: #333; }
    .opt input[type="checkbox"]:checked::before { content: ""; width: 10px; height: 5px; margin-bottom: 3px; border: solid #333; border-width: 0 0 1px 1px; transform: rotate(-45deg); }
    .opt input[type="checkbox"]:disabled:checked::before { border-color: #bbb; }
    .field { height: 28px; padding: 0 3px 7px; background: #fff; border: 1px solid #7a7a7a; outline: 0; min-width: 0; }
    .field:disabled { background: #f0f0f0; border-color: #ccc; color: #838383; }
    .field.active { border-color: #0078d7; }
    .w60 { width: 60px; } .w80 { width: 80px; } .w100 { width: 100px; } .w110 { width: 110px; }
    .w114 { width: 114px; } .w134 { width: 134px; } .w146 { width: 146px; }
    .push { height: 26px; padding: 0; background: #e1e1e1; border: 1px solid #adadad; line-height: 24px; }
    .push.primary { border: 2px solid #0078d7; line-height: 22px; }
    .b78 { width: 78px; } .b86 { width: 86px; } .b90 { width: 90px; } .b162 { width: 162px; }
    .groups { display: flex; gap: 6px; }
    .left { width: 288px; height: 381px; padding: 22px 13px 0; }
    .radios { display: grid; grid-template-columns: 138px 1fr; gap: 26px 0; }
    .gap-label { margin-top: 25px; display: block; }
    .gap-field { display: block; margin: 6px 0 16px 4px; }
    .inset { padding-left: 2px; }
    .area { display: grid; grid-template-columns: 154px 1fr; align-items: end; margin-top: 6px; }
    .seg { display: grid; grid-template-columns: 148px 1fr; justify-items: start; gap: 7px 0; margin: 9px 0 14px; }
    .mid { display: flex; flex-direction: column; gap: 5px; }
    .angle { width: 244px; height: 219px; padding: 22px 9px 0; }
    .angle .radios { grid-template-columns: 118px 1fr; gap: 27px 0; }
    .degrees { display: grid; grid-template-columns: 58px 50px 50px 1fr; margin-top: 26px; }
    .turn { display: flex; align-items: center; margin: 20px 0 13px 11px; }
    .turn .field { margin: 0 12px 0 39px; }
    .edge { margin-left: 11px; display: block; }
    .best { width: 238px; height: 157px; padding: 11px 11px 0; }
    .best .opt { padding-left: 12px; }
    .widths { display: grid; grid-template-columns: 92px 110px; gap: 10px 0; align-items: center; margin-top: 14px; }
    .narrow { flex: 1; padding-top: 14px; min-width: 0; }
    .pair { display: grid; grid-template-columns: 108px 1fr; padding-left: 2px; margin-bottom: 22px; }
    .rest { padding-left: 6px; }
    .dist { display: block; margin-top: 19px; }
    .dist-field { display: block; margin: 5px 0 12px 10px; }
    .opt.wrap { width: 204px; height: 32px; white-space: normal; }
    .corner { display: flex; justify-content: space-between; align-items: center; margin: 10px 0 11px; padding-right: 2px; }
    .flaw { display: block; margin-left: 9px; }
    .auto { width: 164px; height: 25px; margin: 11px 0 0 8px; }
    .foot { display: flex; gap: 262px; padding: 18px 0 15px 191px; }
  `;

  firstUpdated() {
    const field = this.renderRoot.querySelector<HTMLInputElement>("#step");
    field?.focus();
    field?.setSelectionRange(field.value.length, field.value.length);
  }

  private tool(name: string) {
    return html`<button type="button" class=${classMap({ tool: true, on: PRESSED.has(name) })} aria-label=${name}>
      <svg class="icon" viewBox="0 0 24 24">${ICONS[name]}</svg></button>`;
  }

  private option(kind: string, label: string, checked = false, off = false, group = "", wrap = false) {
    return html`<label class=${classMap({ opt: true, off, wrap })}><input type=${kind} name=${group || nothing} .checked=${checked} ?disabled=${off} /><span>${label}</span></label>`;
  }

  private combo(cls: string, label: string, value: string, off = false) {
    return html`<div class="combo ${cls}"><select aria-label=${label} ?disabled=${off}><option>${value}</option></select>
      <svg viewBox="0 0 10 6"><path d="M1 0l4 4 4-4" /></svg></div>`;
  }

  private cell(name: string, right: string, second: string, outline: unknown, selected: boolean) {
    return html`<div class="cell">
      <svg class="thumb" viewBox="0 0 74 39" preserveAspectRatio="none">${outline}</svg>
      <div class="caption"><span>${name.padEnd(8)}${right}</span><span>${second}</span></div>
      <ul class="sizes">
        ${["S", "M", "L", "XL"].map(s => html`<li class=${selected && s === "L" ? "sel" : ""}><i class=${s === "XL" ? "" : "none"}></i><span>0</span><span>${s}</span></li>`)}
      </ul>
    </div>`;
  }

  private hRuler() {
    return svg`${range(133, 700).map(v => {
      const x = Math.round(25 + (v - 140) * PX_PER_CM);
      const len = v % 10 === 0 ? 6 : v % 5 === 0 ? 5 : 3;
      return svg`<path class="tick" d="M${x}.5 16v-${len}" />${v % 10 === 0 ? svg`<text class="ruler-text" x=${x} y="9">${v}</text>` : nothing}`;
    })}<path class="tick" d="M66.500 1v14" />`;
  }

  private vRuler() {
    return svg`${range(0, 172).map(v => {
      const y = Math.round(v * PX_PER_CM);
      const len = v % 10 === 0 ? 6 : v % 5 === 0 ? 5 : 3;
      return svg`<path class="tick" d="M13 ${y}.5h-${len}" />${v % 10 === 0 ? svg`<text class="ruler-text" transform="translate(8 ${Math.max(y, 3)}) rotate(-90)">${v}</text>` : nothing}`;
    })}`;
  }

  private markerCanvas() {
    return html`<svg class="canvas">
      <defs>
        <radialGradient id="warmLens"><stop offset="0" stop-color="#fff6e4" /><stop offset="1" stop-color="#f4bd78" /></radialGradient>
        <radialGradient id="coolLens"><stop offset="0" stop-color="#e8fbff" /><stop offset="1" stop-color="#6fb6ea" /></radialGradient>
        <linearGradient id="fade"><stop offset="0" stop-color="#f4faff" /><stop offset="1" stop-color="#4f9fdc" /></linearGradient>
        <linearGradient id="mosaicTint" x2="1" y2="1"><stop offset="0" stop-color="#f0a060" /><stop offset=".4" stop-color="#e9ddd4" /><stop offset=".7" stop-color="#a8d0b0" /><stop offset="1" stop-color="#c8d890" /></linearGradient>
      </defs>
      <g transform="translate(-99 -228)">
        ${PIECES.map(p => svg`<path class="piece" d=${p.d} fill=${p.fill} />`)}
        ${LABELS.map(l => svg`<g transform="translate(${l.x} ${l.y}) rotate(${l.flip ? 180 : 0})">
          <path class="grain" d="M${-l.half} .5H${l.half}M${-l.half + 8} -2.500L${-l.half} .5l8 3M${l.half - 8} -2.500l8 3l-8 3" />
          <text class="label" y="-3">${l.size}</text><text class="label" y="12">${l.name}</text></g>`)}
        <path class="piece" d="M99 228.500H2400M99 787.500H2400" />
      </g>
    </svg>`;
  }

  private dialog() {
    return html`<div class="overlay"><section class="dialog" role="dialog" aria-labelledby="dlg-title">
      <header class="title"><h1 id="dlg-title">设置超级排料(单位:厘米)</h1>
        <button type="button" class="close" aria-label="关闭"><svg viewBox="0 0 14 14"><path d="M1 1l12 12M13 1L1 13" /></svg></button></header>
      <div class="body">
        <div class="wide">
          <div class="top">
            <div class="group time"><label for="time">时间</label>
              <div class="time-row"><input id="time" class="field w134" value="5" /><span>分钟</span></div></div>
            <div class="stack a">${this.option("checkbox", "仅排主唛架上的纸样")}${this.option("checkbox", "删除辅唛架全部纸样")}</div>
            <div class="stack b">${this.option("checkbox", "对格对条")}${this.option("checkbox", "允许倾斜", true)}${this.option("checkbox", "允许挤压", true)}</div>
          </div>
          <div class="groups">
            <div class="group left">
              <div class="radios">
                ${this.option("radio", "混排", true, false, "mode")}${this.option("radio", "按件分段", false, false, "mode")}
                ${this.option("radio", "按码分段", false, false, "mode")}${this.option("radio", "按片分段", false, false, "mode")}
                ${this.option("radio", "自定义分段", false, false, "mode")}${this.option("radio", "按距离分段", false, false, "mode")}
              </div>
              <label class="gap-label" for="gap">段间隔(负数段间距离; 正数段间嵌套)</label>
              <input id="gap" class="field w80 gap-field" value="0" disabled />
              <div class="inset">
                ${this.option("checkbox", "小面积纸样混排", false, true)}
                <div class="area"><label for="area">参与混排的最大面积</label><input id="area" class="field w100" value="300" disabled /></div>
                <div class="seg"><label for="len">段长</label><label for="space">间隔</label>
                  <input id="len" class="field w80" value="148" disabled /><input id="space" class="field w80" value="2" disabled /></div>
                ${this.option("checkbox", "使用基准线作为分割符", true, true)}
              </div>
            </div>
            <div class="mid">
              <div class="group angle">
                <div class="radios">
                  ${this.option("radio", "同一方向", false, false, "dir")}${this.option("radio", "同件同向", false, false, "dir")}
                  ${this.option("radio", "同码同向", false, false, "dir")}${this.option("radio", "任意角度", true, false, "dir")}
                </div>
                <div class="degrees">
                  ${this.option("radio", "180", true, false, "deg")}${this.option("radio", "90", false, false, "deg")}
                  ${this.option("radio", "45", false, false, "deg")}${this.option("radio", "自定义", false, false, "deg")}
                </div>
                <div class="turn"><button type="button" class="push b90">旋转设置</button><input id="deg" class="field w60" value="0" disabled /><label for="deg">度</label></div>
                <button type="button" class="push b86 edge">纸样靠边</button>
              </div>
              <div class="group best">
                ${this.option("checkbox", "使用最佳幅宽", true)}
                <div class="widths">
                  <label for="min">最小幅宽</label><input id="min" class="field w110" value="160" />
                  <label for="max">最大幅宽</label><input id="max" class="field w110" value="170" />
                  <label for="step">幅宽步长</label><input id="step" class="field w110 active" value="5" />
                </div>
              </div>
            </div>
          </div>
        </div>
        <div class="narrow">
          <div class="pair">${this.option("checkbox", "虚位")}${this.option("checkbox", "虚位重叠", false, true)}</div>
          ${this.option("checkbox", "允许纸样镂空处放置纸样", true)}
          <div class="rest">
            <label class="dist" for="dist">样片距离(正数距离;负数重叠)</label>
            <input id="dist" class="field w114 dist-field" value="0" />
            ${this.option("checkbox", "排公共边(只有在样片距离大于0有效)", false, false, "", true)}
            <div class="corner"><label for="corner">压角量</label><input id="corner" class="field w146" value="0" /></div>
            <button type="button" class="push b162 flaw">面料瑕疵设置</button>
            ${this.combo("auto", "方式", "自动")}
          </div>
        </div>
      </div>
      <footer class="foot"><button type="button" class="push primary b78">确定</button><button type="button" class="push b78">取消</button></footer>
    </section></div>`;
  }

  render() {
    return html`<div class="app">
      <nav class="menu">${["文档[F]", "纸样[P]", "唛架[M]", "选项[O]", "排料[N]", "计算[L]", "制帽[k]", "系统设置", "帮助[H]"].map(m => html`<a href="#">${m}</a>`)}</nav>
      <div class="bar">
        <div class="tools">${TOP_TOOLS.map(t => this.tool(t))}</div>
        <div class="combos"><div class="grip"></div>${this.combo("bar-combo", "面料", "fabric")}${this.combo("bar-combo", "层", "0", true)}</div>
      </div>
      <div class="work">
        <div class="rail">${LEFT_TOOLS.map(t => this.tool(t))}</div>
        <div class="rail side">${this.tool("mosaic")}</div>
        <main class="main">
          <div class="pieces">
            ${this.cell("back", "X", "  1     -", svg`<path d="M5 4h64v31H5z" fill="#60462e" /><path d="M15 35V3.500H42l4 4M15 35H42l4-4" fill="none" stroke="#000" /><path d="M15.500 35V4M43 4c6 5 15 6 16 15c-1 9-10 11-16 16" fill="none" stroke="#fff" />`, true)}
            ${this.cell("sleeve", "X", "  2   DS-", svg`<path d="M14.500 11L41 4.500c4 7 8 10 13 13l4 1v4h-3c-6 3-9 6-13 12L15 29z" fill="none" stroke="#000" />`, false)}
            ${this.cell("front", "X", "  3     -", svg`<path d="M15.500 2.500H41c5 5 14 6 17 13c-4 1-4 7 0 8c-3 6-11 9-17 14H15.500zM47 19.500h9" fill="none" stroke="#000" stroke-width="1.200" />`, false)}
          </div>
          <div class="marker">
            <svg class="hruler">${this.hRuler()}</svg>
            <svg class="vruler">${this.vRuler()}</svg>
            ${this.markerCanvas()}
            <div class="scroll"><svg viewBox="0 0 8 12"><path d="M7 1L2 6l5 5" /></svg>
              <div class="track"><div class="before"></div><div class="thumbbar"></div><div class="after"></div></div>
              <svg viewBox="0 0 8 12"><path d="M1 1l5 5-5 5" /></svg></div>
          </div>
          <div class="lower"><div class="lower-in"></div></div>
        </main>
        <div class="rail right">${RIGHT_TOOLS.map(t => this.tool(t))}</div>
      </div>
      <div class="status"><span class="ready">就绪</span><span class="s1">每套用料:0米81.19厘米(81.19厘米)</span><span class="s2">总数: 48</span><span class="s3">放置数: 48</span><span class="s4">利用率: 81.60%</span><span class="s5">幅长:9米74.28厘米(974.28厘米)</span><span class="s6">幅宽:1米65厘米(165厘米)(1米65厘米(165厘米))</span><span class="s7">层数:1</span><span class="s8">厘米</span><span class="s9">数据库连接成功</span>
        <svg class="size-grip" viewBox="0 0 16 18"><path d="M9 16h3M13 16h3M5 16h3M9 12h3M13 12h3M13 8h3" stroke="#b5b5b5" stroke-width="3" /></svg></div>
      ${this.dialog()}
    </div>`;
  }
}
